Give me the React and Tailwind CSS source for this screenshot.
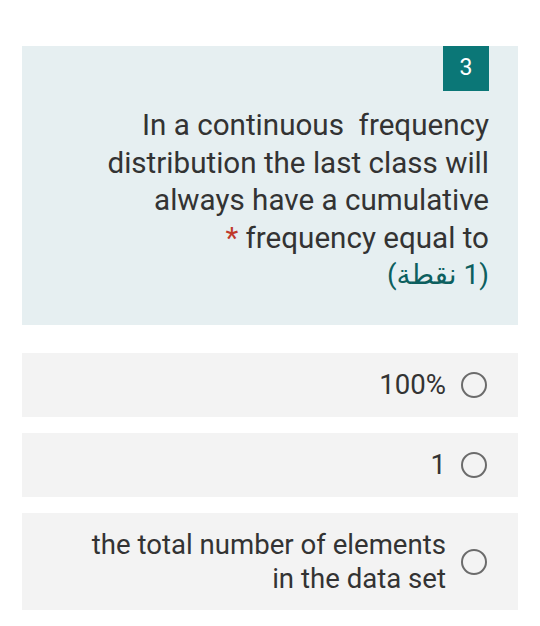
import React from "react";

const options = [
  { id: 1, lines: ["100%"] },
  { id: 2, lines: ["1"] },
  { id: 3, lines: ["the total number of elements", "in the data set"], wide: true },
];

const questionLines = [
  "In a continuous\u00a0 frequency",
  "distribution the last class will",
  "always have a cumulative",
];

const Radio = () => (
  <span className="block w-[26px] h-[26px] shrink-0 rounded-full border-2 border-[#6b6b6b] bg-transparent" />
);

export default function App() {
  return (
    <div
      className="w-[540px] h-[626px] bg-white pt-[46px] px-[22px] text-[#333333]"
      style={{ fontFamily: "Roboto, 'Noto Sans', sans-serif" }}
    >
      {/* ---------- QUESTION ---------- */}
      <div className="bg-[#e6eff1] h-[279px] pr-[29px] flex flex-col items-end">
        <div className="w-[46px] h-[45px] bg-[#0b7777] text-white text-[23px] flex items-center justify-center">
          3
        </div>
        <div className="mt-[16px] text-right text-[29.6px] leading-[37.5px] whitespace-nowrap">
          {questionLines.map((l) => (
            <div key={l}>{l}</div>
          ))}
          <div>
            <span className="text-[#c0392b]">*</span> frequency equal to
          </div>
        </div>
        <p
          dir="rtl"
          className="text-[28px] leading-[36px] text-[#0d5f5f]"
          style={{ fontFamily: "Roboto, 'Noto Sans', 'DejaVu Sans', sans-serif" }}
        >
          (1 نقطة)
        </p>
      </div>

      {/* ---------- OPTIONS ---------- */}
      <div className="mt-[28px] flex flex-col gap-[16px]">
        {options.map((o) => (
          <div
            key={o.id}
            className={`bg-[#f3f3f3] flex items-center justify-end pr-[31px] gap-[15px] ${
              o.wide ? "h-[97px]" : "h-[64px]"
            }`}
          >
            <div className="text-right text-[27.6px] leading-[34px] whitespace-nowrap">
              {o.lines.map((l) => (
                <div key={l}>{l}</div>
              ))}
            </div>
            <Radio />
          </div>
        ))}
      </div>
    </div>
  );
}
